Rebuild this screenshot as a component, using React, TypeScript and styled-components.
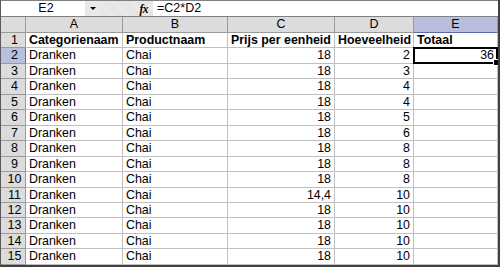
import React from 'react';
import styled, { createGlobalStyle } from 'styled-components';

const GlobalStyle = createGlobalStyle`
    html, body {
        margin: 0;
        padding: 0;
        background: #ffffff;
    }
    body {
        font-family: "Liberation Sans", Arial, sans-serif;
    }
`;

interface IRow {
    cat: string;
    product: string;
    price: string;
    qty: string;
    total?: string;
}

const headers = ['Categorienaam', 'Productnaam', 'Prijs per eenheid', 'Hoeveelheid', 'Totaal'];
const quantities = ['2', '3', '4', '4', '5', '6', '8', '8', '8', '10', '10', '10', '10', '10'];

const rows: IRow[] = quantities.map((qty, i) => ({
    cat: 'Dranken',
    product: 'Chai',
    price: i === 9 ? '14,4' : '18',
    qty,
    total: i === 0 ? '36' : undefined,
}));

const ROW_H = 15.467;

const App = () => {
    return (
        <>
            <GlobalStyle />
            <Window>
                <FormulaBar>
                    <NameBox>E2</NameBox>
                    <DropButton><Arrow /></DropButton>
                    <FxArea><Fx>fx</Fx></FxArea>
                    <FormulaInput>=C2*D2</FormulaInput>
                </FormulaBar>
                <Sheet>
                    <Corner />
                    {['A', 'B', 'C', 'D', 'E'].map(col => (
                        <ColHeader key={col} selected={col === 'E'}>{col}</ColHeader>
                    ))}

                    <RowHeader selected={false}>1</RowHeader>
                    {headers.map(h => (
                        <Cell key={h} bold>{h}</Cell>
                    ))}

                    {rows.map((row, i) => (
                        <React.Fragment key={i}>
                            <RowHeader selected={i === 0}>{i + 2}</RowHeader>
                            <Cell>{row.cat}</Cell>
                            <Cell>{row.product}</Cell>
                            <Cell numeric>{row.price}</Cell>
                            <Cell numeric>{row.qty}</Cell>
                            {row.total ? (
                                <ActiveCell>
                                    {row.total}
                                    <FillHandle />
                                </ActiveCell>
                            ) : (
                                <Cell numeric />
                            )}
                        </React.Fragment>
                    ))}
                </Sheet>
            </Window>
        </>
    );
};

export default App;

const Window = styled.div`
    width: 500px;
    height: 267px;
    box-sizing: border-box;
    border-left: 1px solid #5a5a5a;
    border-right: 2px solid #404040;
    border-bottom: 2px solid #404040;
    overflow: hidden;
    display: flex;
    flex-direction: column;
    background: #ffffff;
`;

const FormulaBar = styled.div`
    height: 17px;
    box-sizing: border-box;
    display: flex;
    border-top: 1px solid #808080;
    border-bottom: 1px solid #808080;
    background: #e6e6e6;
    font-size: 12.5px;
`;

const NameBox = styled.div`
    width: 84px;
    background: #ffffff;
    text-align: center;
    line-height: 15px;
    color: #000;
    padding-left: 6px;
    box-sizing: border-box;
`;

const DropButton = styled.div`
    width: 15px;
    display: flex;
    align-items: center;
    justify-content: center;
    background: #e9e9e9;
`;

const Arrow = styled.span`
    width: 0;
    height: 0;
    border-left: 3px solid transparent;
    border-right: 3px solid transparent;
    border-top: 3px solid #000;
`;

const FxArea = styled.div`
    width: 53px;
    display: flex;
    align-items: center;
    justify-content: flex-end;
    padding-right: 5px;
    box-sizing: border-box;
    background: repeating-linear-gradient(45deg, #e2e2e2 0 1px, #ececec 1px 2px);
`;

const Fx = styled.span`
    font-family: "Liberation Serif", "Times New Roman", serif;
    font-style: italic;
    font-weight: bold;
    font-size: 11.5px;
    letter-spacing: -0.5px;
    color: #000;
`;

const FormulaInput = styled.div`
    flex: 1;
    background: #ffffff;
    line-height: 15px;
    padding-left: 4px;
    color: #000;
`;

const Sheet = styled.div`
    display: grid;
    grid-template-columns: 25px 97px 105px 107px 79px 1fr;
    grid-template-rows: 16px repeat(15, ${ROW_H}px);
    font-size: 12.4px;
    color: #000;
`;

const Corner = styled.div`
    background: #dcdcdc;
    border-right: 1px solid #9a9a9a;
    border-bottom: 1px solid #9a9a9a;
`;

const ColHeader = styled.div<{ selected: boolean }>`
    background: ${p => (p.selected ? '#b7bfdc' : '#dcdcdc')};
    border-right: 1px solid #9a9a9a;
    border-bottom: 1px solid ${p => (p.selected ? '#5b6aa8' : '#9a9a9a')};
    text-align: center;
    line-height: 15px;
    font-size: 12.5px;
    overflow: hidden;
`;

const RowHeader = styled.div<{ selected: boolean }>`
    background: ${p => (p.selected ? '#b7bfdc' : '#dcdcdc')};
    border-right: 1px solid ${p => (p.selected ? '#5b6aa8' : '#9a9a9a')};
    border-bottom: 1px solid #9a9a9a;
    box-sizing: border-box;
    text-align: center;
    line-height: 14px;
    padding-left: 3px;
    font-size: 12.5px;
    overflow: hidden;
`;

const Cell = styled.div<{ bold?: boolean; numeric?: boolean }>`
    border-right: 1px solid #c0c0c0;
    border-bottom: 1px solid #c0c0c0;
    box-sizing: border-box;
    padding: 0 3px;
    line-height: 15px;
    white-space: nowrap;
    overflow: hidden;
    font-size: 12.4px;
    font-weight: ${p => (p.bold ? 'bold' : 'normal')};
    text-align: ${p => (p.numeric ? 'right' : 'left')};
`;

const ActiveCell = styled.div`
    position: relative;
    margin: -1px 0 0 -1px;
    border: 2px solid #000;
    box-sizing: border-box;
    padding: 0 2px;
    line-height: 12px;
    text-align: right;
    background: #ffffff;
`;

const FillHandle = styled.span`
    position: absolute;
    right: -4px;
    bottom: -4px;
    width: 5px;
    height: 5px;
    background: #000;
    border: 1px solid #fff;
`;
